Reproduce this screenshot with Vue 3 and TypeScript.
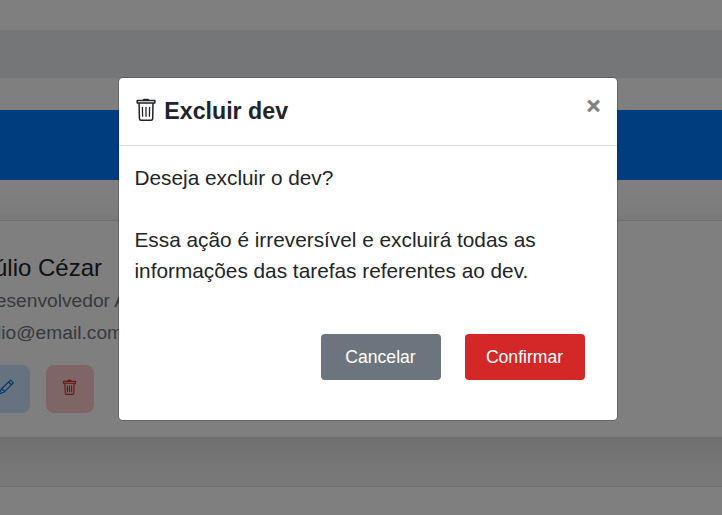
<script setup lang="ts">
interface Dev {
  name: string
  role: string
  email: string
}

const dev: Dev = { name: 'Júlio Cézar', role: 'Desenvolvedor A', email: 'julio@email.com' }
</script>

<template>
  <div class="screen">
    <div class="page">
      <div class="breadcrumb"></div>
      <div class="banner"></div>
      <section class="card">
        <h4 class="dev-name">{{ dev.name }}</h4>
        <p class="dev-line">{{ dev.role }}</p>
        <p class="dev-line">{{ dev.email }}</p>
        <div class="dev-actions">
          <button class="action edit" type="button" aria-label="Editar">
            <svg width="16" height="16" viewBox="0 0 16 16" fill="none" stroke="currentColor" stroke-width="1.1" stroke-linejoin="round">
              <path d="M12.5 1.1 15.3 3.9 6.3 12.9 1 15l2.3-5zM10.6 3l2.8 2.8M3.3 10q1.7-.3 1.5 1.4 1.7-.2 1.5 1.5" />
            </svg>
          </button>
          <button class="action remove" type="button" aria-label="Excluir">
            <svg width="16" height="16" viewBox="0 0 16 16" fill="none" stroke="currentColor" stroke-width="1.1" stroke-linejoin="round">
              <path d="M1.4 2.4h12.2v1.8H1.4zM2.9 4.3l.3 9.9q.1 1.2 1.2 1.2h6.2q1.1 0 1.2-1.2l.3-9.9M5.7 2.1l.5-.7h2.6l.5.7M5.4 6.6v6.6M7.5 6.6v6.6M9.6 6.6v6.6" />
            </svg>
          </button>
        </div>
      </section>
      <section class="card"></section>
    </div>

    <div class="backdrop">
      <div class="modal" role="dialog" aria-modal="true">
        <header class="modal-header">
          <h5 class="modal-title">
            <svg class="title-icon" width="24" height="24" viewBox="0 0 24 24" fill="none" stroke="currentColor" stroke-width="1.5" stroke-linejoin="round">
              <path d="M3.2 2.6h17.7v2.5H3.2zM5.1 5.2l.3 15.4q.1 1.7 1.7 1.7h9.9q1.6 0 1.7-1.7L19 5.2" />
              <path d="M8.8 2.2l.8-1.1h4.8l.8 1.1z" fill="currentColor" stroke-width=".6" />
              <path d="M8.4 9l.2 9.8M12 9v9.8M15.6 9l-.2 9.8" stroke-width="1.3" />
            </svg>
            <span>Excluir dev</span>
          </h5>
          <button class="close" type="button" aria-label="Fechar">×</button>
        </header>
        <div class="modal-body">
          <p>Deseja excluir o dev?</p>
          <p class="warning">Essa ação é irreversível e excluirá todas as informações das tarefas referentes ao dev.</p>
        </div>
        <footer class="modal-footer">
          <button class="btn cancel" type="button">Cancelar</button>
          <button class="btn confirm" type="button">Confirmar</button>
        </footer>
      </div>
    </div>
  </div>
</template>

<style>
body {
  margin: 0;
  overflow: hidden;
}
</style>

<style scoped>
* {
  box-sizing: border-box;
}

h4,
h5,
p {
  margin: 0;
}

button {
  padding: 0;
  border: 0;
  font-family: inherit;
}

.screen {
  display: grid;
  grid-template: 515px / 722px;
  overflow: hidden;
  color: #212529;
  font-family: 'Liberation Sans', Arial, sans-serif;
  font-size: 16px;
  line-height: 1.5;
}

.page,
.backdrop {
  grid-area: 1 / 1;
  min-width: 0;
  min-height: 0;
}

.page {
  padding-top: 30px;
  overflow: hidden;
  background: #fff;
}

.breadcrumb {
  height: 48px;
  background: #e9ecef;
}

.banner {
  height: 70px;
  margin: 32px 0 40px;
  background: #007bff;
}

.card {
  height: 218px;
  margin: 0 -60px 48px;
  padding: 29px 41px;
  border: 1px solid rgba(0, 0, 0, 0.125);
  background: #fff;
  box-shadow: 0 16px 48px rgba(0, 0, 0, 0.175);
}

.dev-name {
  height: 35px;
  font-size: 24px;
  font-weight: 400;
  line-height: 35px;
}

.dev-line {
  height: 32px;
  color: #6c757d;
  font-size: 19.2px;
  line-height: 32px;
}

.dev-actions {
  display: flex;
  gap: 16px;
  padding-top: 16px;
}

.action {
  display: flex;
  align-items: center;
  justify-content: center;
  width: 48px;
  height: 48px;
  border-radius: 8px;
}

.edit {
  background: #cce5ff;
  color: #0069c7;
}

.remove {
  background: #ffcccc;
  color: #d42828;
}

.action svg {
  margin-bottom: 4px;
}

.backdrop {
  display: flex;
  align-items: flex-start;
  z-index: 1;
  padding: 77px 0 0 118px;
  background: rgba(0, 0, 0, 0.5);
}

.modal {
  width: 500px;
  height: 344px;
  border: 1px solid rgba(0, 0, 0, 0.2);
  border-radius: 4.8px;
  background: #fff;
  background-clip: padding-box;
}

.modal-header {
  display: flex;
  align-items: flex-start;
  justify-content: space-between;
  height: 68px;
  padding: 16px 15.5px 0 15px;
  border-bottom: 1px solid #dee2e6;
}

.modal-title {
  display: flex;
  gap: 6.3px;
  font-size: 23.2px;
  font-weight: 700;
  line-height: 34px;
}

.title-icon {
  margin-top: 4px;
}

.close {
  width: 16px;
  background: transparent;
  color: #7f7f7f;
  font-size: 24px;
  font-weight: 700;
  line-height: 24px;
  -webkit-text-stroke: 0.5px #7f7f7f;
}

.modal-body {
  padding: 16px 16px 16.6px 15.5px;
  font-size: 20.8px;
  line-height: 31px;
}

.warning {
  padding-top: 31px;
}

.modal-footer {
  display: flex;
  justify-content: flex-end;
  gap: 24px;
  padding: 31px 32px 0;
}

.btn {
  width: 120px;
  height: 46px;
  padding: 2px 1px 0 0;
  border-radius: 4px;
  color: #fff;
  font-size: 17.6px;
}

.cancel {
  background: #6c757d;
}

.confirm {
  background: #d42828;
}
</style>
